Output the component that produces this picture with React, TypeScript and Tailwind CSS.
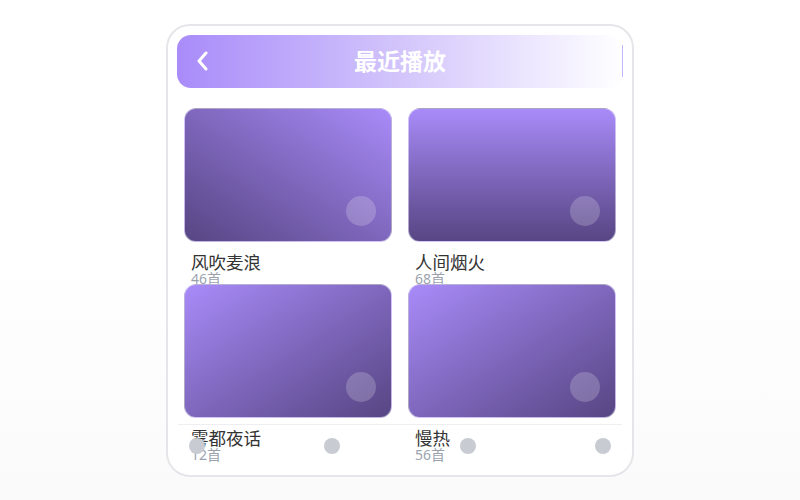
import React from 'react';

const albums = [
  { name: '风吹麦浪', count: 46, bg: 'bg-gradient-to-tr from-[#574684] to-[#a98bf9]' },
  { name: '人间烟火', count: 68, bg: 'bg-gradient-to-b from-[#a98bf9] to-[#574684]' },
  { name: '雾都夜话', count: 12, bg: 'bg-gradient-to-br from-[#a98bf9] to-[#574684]' },
  { name: '慢热', count: 56, bg: 'bg-gradient-to-br from-[#a98bf9] to-[#574684]' },
];

export default function App() {
  return (
    <div
      className="w-[800px] h-[500px] bg-gradient-to-b from-white via-white to-[#fafafb] flex justify-center pt-[24px]"
      style={{ fontFamily: '"Noto Sans", "Noto Sans CJK SC", sans-serif' }}
    >
      <div className="relative w-[468px] h-[453px] rounded-[24px] border-2 border-[#e6e6ea] bg-white overflow-hidden">
        {/* Header */}
        <div className="relative mx-[9px] mt-[9px] h-[53px] rounded-[14px] bg-gradient-to-r from-[#a98bf9] via-[#d3c5fb] to-white flex items-center justify-center">
          <svg
            className="absolute left-[19px] top-[16px] w-[14px] h-[20px]"
            viewBox="0 0 14 20"
            fill="none"
            stroke="white"
            strokeWidth={3}
            strokeLinecap="round"
            strokeLinejoin="round"
          >
            <path d="M10 2 L3 10 L10 18" />
          </svg>
          <h1 className="text-[23px] font-bold text-white -mt-[1px]">最近播放</h1>
          <div className="absolute right-0 top-[10px] w-px h-[32px] bg-[#c4b5fd]" />
        </div>

        {/* Grid */}
        <div className="grid grid-cols-2 gap-x-[16px] px-[16px] pt-[20px]">
          {albums.map((a) => (
            <div key={a.name} className="h-[176px] flex flex-col">
              <div className={`relative shrink-0 h-[134px] rounded-[12px] border border-white/50 ${a.bg}`}>
                <div className="absolute right-[15px] bottom-[15px] w-[30px] h-[30px] rounded-full bg-white/20" />
              </div>
              <div className="pl-[7px] pt-[10px]">
                <p className="text-[17.5px] text-[#333] leading-[21px]">{a.name}</p>
                <p className="text-[14px] text-[#9ca3af] leading-[14px] -mt-[1px]">{a.count}首</p>
              </div>
            </div>
          ))}
        </div>

        {/* Bottom bar */}
        <div className="absolute left-[10px] right-[10px] top-[398px] border-t border-[#eeeef2] flex justify-between px-[11px] pt-[13px]">
          <span className="w-[16px] h-[16px] rounded-full bg-[#c8ccd2]" />
          <span className="w-[16px] h-[16px] rounded-full bg-[#c8ccd2]" />
          <span className="w-[16px] h-[16px] rounded-full bg-[#c8ccd2]" />
          <span className="w-[16px] h-[16px] rounded-full bg-[#c8ccd2]" />
        </div>
      </div>
    </div>
  );
}
